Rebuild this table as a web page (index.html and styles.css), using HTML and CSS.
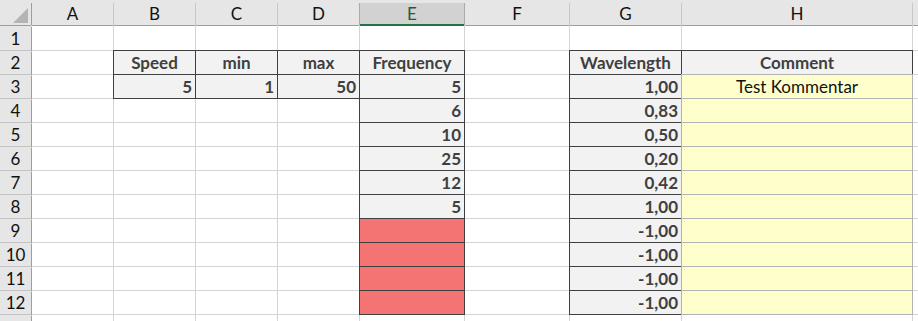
FILE: index.html
```html
<!DOCTYPE html>
<html lang="en">
<head>
    <meta charset="UTF-8">
    <meta name="viewport" content="width=device-width, initial-scale=1.0">
    <title>Frequency Sheet</title>
    <link rel="stylesheet" href="styles.css">
</head>
<body>
    <div class="sheet-wrap">
        <div class="sheet">
            <!-- column headers -->
            <div class="c corner">
                <svg width="31" height="22" viewBox="0 0 31 22"><polygon points="28,5 28,20 13,20" fill="#b4b4b4"/></svg>
            </div>
            <div class="c hd">A</div>
            <div class="c hd">B</div>
            <div class="c hd">C</div>
            <div class="c hd">D</div>
            <div class="c hd sel">E</div>
            <div class="c hd">F</div>
            <div class="c hd">G</div>
            <div class="c hd">H</div>
            <div class="c hd"></div>

            <!-- row 1 -->
            <div class="c rh">1</div>
            <div class="c"></div><div class="c"></div><div class="c"></div><div class="c"></div>
            <div class="c"></div><div class="c"></div><div class="c"></div><div class="c"></div><div class="c"></div>

            <!-- row 2 -->
            <div class="c rh">2</div>
            <div class="c"></div>
            <div class="c out ctr">Speed</div>
            <div class="c out ctr">min</div>
            <div class="c out ctr">max</div>
            <div class="c out ctr">Frequency</div>
            <div class="c"></div>
            <div class="c out ctr">Wavelength</div>
            <div class="c out ctr">Comment</div>
            <div class="c"></div>

            <!-- row 3 -->
            <div class="c rh">3</div>
            <div class="c"></div>
            <div class="c out num">5</div>
            <div class="c out num">1</div>
            <div class="c out num">50</div>
            <div class="c out num">5</div>
            <div class="c"></div>
            <div class="c out num">1,00</div>
            <div class="c note ctr">Test Kommentar</div>
            <div class="c"></div>

            <!-- row 4 -->
            <div class="c rh">4</div>
            <div class="c"></div><div class="c"></div><div class="c"></div><div class="c"></div>
            <div class="c out num">6</div>
            <div class="c"></div>
            <div class="c out num">0,83</div>
            <div class="c note"></div>
            <div class="c"></div>

            <!-- row 5 -->
            <div class="c rh">5</div>
            <div class="c"></div><div class="c"></div><div class="c"></div><div class="c"></div>
            <div class="c out num">10</div>
            <div class="c"></div>
            <div class="c out num">0,50</div>
            <div class="c note"></div>
            <div class="c"></div>

            <!-- row 6 -->
            <div class="c rh">6</div>
            <div class="c"></div><div class="c"></div><div class="c"></div><div class="c"></div>
            <div class="c out num">25</div>
            <div class="c"></div>
            <div class="c out num">0,20</div>
            <div class="c note"></div>
            <div class="c"></div>

            <!-- row 7 -->
            <div class="c rh">7</div>
            <div class="c"></div><div class="c"></div><div class="c"></div><div class="c"></div>
            <div class="c out num">12</div>
            <div class="c"></div>
            <div class="c out num">0,42</div>
            <div class="c note"></div>
            <div class="c"></div>

            <!-- row 8 -->
            <div class="c rh">8</div>
            <div class="c"></div><div class="c"></div><div class="c"></div><div class="c"></div>
            <div class="c out num">5</div>
            <div class="c"></div>
            <div class="c out num">1,00</div>
            <div class="c note"></div>
            <div class="c"></div>

            <!-- rows 9-12: frequency out of range -->
            <div class="c rh">9</div>
            <div class="c"></div><div class="c"></div><div class="c"></div><div class="c"></div>
            <div class="c bad"></div>
            <div class="c"></div>
            <div class="c out num">-1,00</div>
            <div class="c note"></div>
            <div class="c"></div>

            <div class="c rh">10</div>
            <div class="c"></div><div class="c"></div><div class="c"></div><div class="c"></div>
            <div class="c bad"></div>
            <div class="c"></div>
            <div class="c out num">-1,00</div>
            <div class="c note"></div>
            <div class="c"></div>

            <div class="c rh">11</div>
            <div class="c"></div><div class="c"></div><div class="c"></div><div class="c"></div>
            <div class="c bad"></div>
            <div class="c"></div>
            <div class="c out num">-1,00</div>
            <div class="c note"></div>
            <div class="c"></div>

            <div class="c rh">12</div>
            <div class="c"></div><div class="c"></div><div class="c"></div><div class="c"></div>
            <div class="c bad"></div>
            <div class="c"></div>
            <div class="c out num">-1,00</div>
            <div class="c note"></div>
            <div class="c"></div>

            <!-- start of row 13 -->
            <div class="c rh"></div>
            <div class="c"></div><div class="c"></div><div class="c"></div><div class="c"></div>
            <div class="c"></div><div class="c"></div><div class="c"></div><div class="c"></div><div class="c"></div>
        </div>
    </div>
</body>
</html>
```

FILE: styles.css
```css
html, body {
    margin: 0;
    padding: 0;
    overflow: hidden;
    background-color: #fff;
}
.sheet-wrap {
    background-color: #e6e6e6;
    padding-top: 3px;
    width: 918px;
    height: 321px;
    box-sizing: border-box;
    overflow: hidden;
}
.sheet {
    display: grid;
    grid-template-columns: 31px 81px 81px 81px 81px 104px 104px 111px 230px 1fr;
    grid-template-rows: 22px 24px repeat(11, 23px) 6px;
    gap: 1px;
    background-color: #d4d4d4;
}
.c {
    background-color: #fff;
    font-family: Lato, "Open Sans", sans-serif;
    font-size: 17px;
    line-height: 20px;
    color: #111;
    display: flex;
    align-items: flex-end;
    padding: 0 3px 1px 3px;
    white-space: nowrap;
    box-sizing: border-box;
}
.hd {
    background-color: #e6e6e6;
    justify-content: center;
    align-items: center;
    padding: 0;
    box-shadow: 0 1px 0 #9e9e9e, 1px 0 0 #c8c8c8;
}
.hd.sel {
    background-color: #d2d2d2;
    color: #1e5c38;
    box-shadow: inset 0 -1px 0 #217346, 0 1px 0 #217346, 1px 0 0 #ababab, -1px 0 0 #ababab;
}
.corner {
    background-color: #e6e6e6;
    padding: 0;
    box-shadow: 0 1px 0 #9e9e9e, 1px 0 0 #9e9e9e;
}
.rh {
    background-color: #e6e6e6;
    justify-content: center;
    padding: 0 0 1px 0;
    box-shadow: 0 1px 0 #c4c4c4, 1px 1px 0 #9e9e9e;
}
.out {
    background-color: #f2f2f2;
    color: #3f3f3f;
    font-weight: bold;
    outline: 1px solid #3f3f3f;
}
.num {
    justify-content: flex-end;
}
.ctr {
    justify-content: center;
}
.note {
    background-color: #ffffcc;
    box-shadow: 0 0 0 1px #b2b2b2;
}
.bad {
    background-color: #f47373;
    outline: 1px solid #3f3f3f;
}
```
